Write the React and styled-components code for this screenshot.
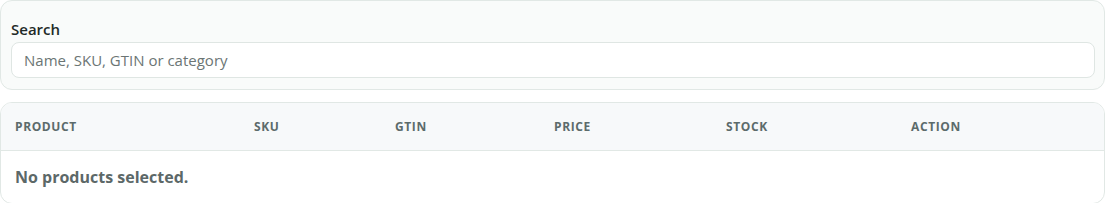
import React from 'react';
import styled, { createGlobalStyle } from 'styled-components';

const GlobalStyle = createGlobalStyle`
  body {
    margin: 0;
    background: #ffffff;
    font-family: "Open Sans", "Noto Sans", sans-serif;
  }
`;

const columns = [
  { key: 'product', label: 'Product' },
  { key: 'sku', label: 'SKU' },
  { key: 'gtin', label: 'GTIN' },
  { key: 'price', label: 'Price' },
  { key: 'stock', label: 'Stock' },
  { key: 'action', label: 'Action' },
];

const gridCols = '239px 141px 159px 172px 185px 1fr';

function App() {
  return (
    <>
      <GlobalStyle />
      <Page>
        <SearchCard>
          <Label htmlFor="product-search">Search</Label>
          <SearchInput id="product-search" placeholder="Name, SKU, GTIN or category" />
        </SearchCard>

        <TableCard>
          <HeaderRow>
            {columns.map((c) => (
              <HeaderCell key={c.key}>{c.label}</HeaderCell>
            ))}
          </HeaderRow>
          <EmptyRow>No products selected.</EmptyRow>
        </TableCard>
      </Page>
    </>
  );
}

const Page = styled.div`
  display: flex;
  flex-direction: column;
  gap: 12px;
  width: 1105px;
`;

const SearchCard = styled.div`
  display: flex;
  flex-direction: column;
  padding: 18px 9px 11px 10px;
  background: #f9fbfa;
  border: 1px solid #e1e8e5;
  border-radius: 12px;
`;

const Label = styled.label`
  font-size: 15px;
  font-weight: 600;
  line-height: 20px;
  color: #1f2a28;
  margin-bottom: 3px;
`;

const SearchInput = styled.input`
  height: 36px;
  box-sizing: border-box;
  padding: 0 12px;
  border: 1px solid #dfe6e3;
  border-radius: 8px;
  background: #ffffff;
  font-family: inherit;
  font-size: 15px;
  color: #1f2a28;
  outline: none;

  &::placeholder {
    color: #6b7574;
  }
`;

const TableCard = styled.div`
  border: 1px solid #e1e8e5;
  border-radius: 12px;
  overflow: hidden;
  background: #ffffff;
`;

const HeaderRow = styled.div`
  display: grid;
  grid-template-columns: ${gridCols};
  height: 47px;
  align-items: center;
  background: #f7f9fa;
  border-bottom: 1px solid #e1e8e5;
`;

const HeaderCell = styled.div`
  padding-left: 14px;
  font-size: 12px;
  font-weight: 700;
  letter-spacing: 0.6px;
  text-transform: uppercase;
  color: #5c6b6b;
`;

const EmptyRow = styled.div`
  height: 52px;
  display: flex;
  align-items: center;
  padding-left: 14px;
  font-size: 16px;
  font-weight: 700;
  color: #5c6868;
`;

export default App;
